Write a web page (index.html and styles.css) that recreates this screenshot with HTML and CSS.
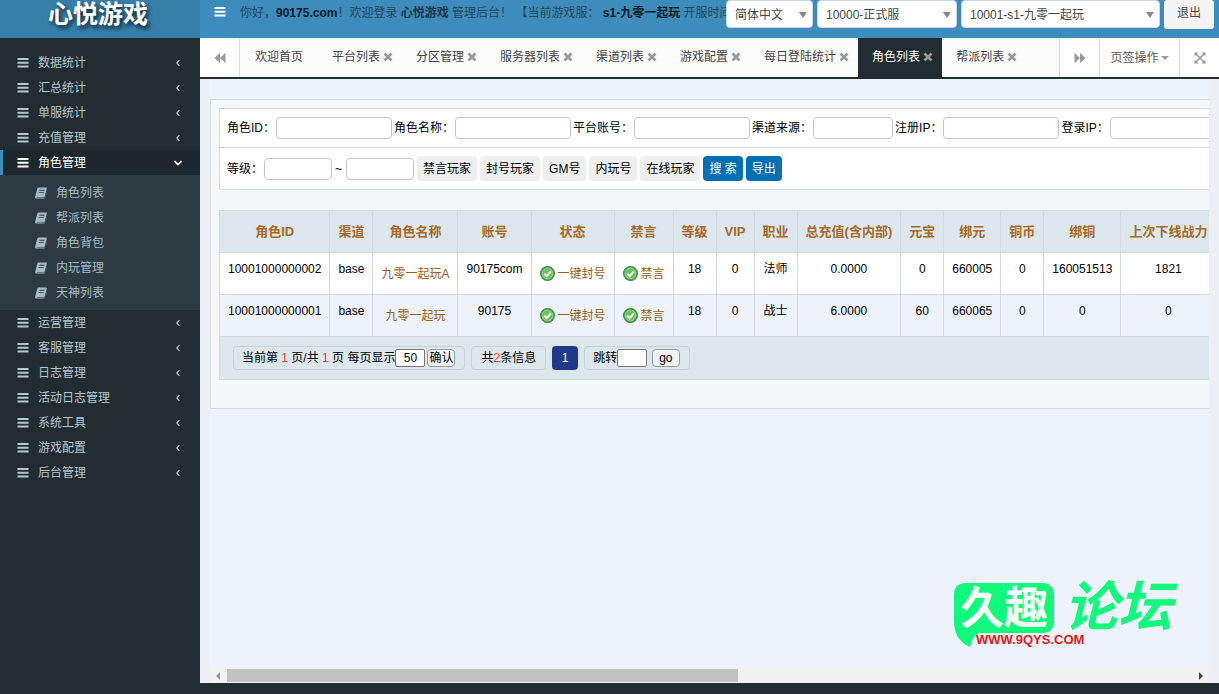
FILE: index.html
```html
<!DOCTYPE html>
<html lang="zh-CN">
<head>
<meta charset="utf-8">
<title>心悦游戏 管理后台</title>
<link rel="stylesheet" href="styles.css">
</head>
<body>
<svg class="sprite" aria-hidden="true">
  <symbol id="bars" viewBox="0 0 12 12"><path d="M.5 1h11v2H.5zM.5 4.700h11v2H.5zM.5 8.400h11v2H.5z" fill="currentColor"/></symbol>
  <symbol id="left" viewBox="0 0 6 10"><path d="M4.8 1.5 1.5 5l3.300 3.500" fill="none" stroke="currentColor" stroke-width="1.500"/></symbol>
  <symbol id="down" viewBox="0 0 10 6"><path d="M1.500 1.200 5 4.500 8.500 1.200" fill="none" stroke="currentColor" stroke-width="1.700"/></symbol>
  <symbol id="book" viewBox="0 0 12 12"><path d="M3.600.5h7.600q.8.2.6 1L9.700 9.600q-.3 1-1.300 1H2q-.6.4 0 .5h7q1 0 1.300-1L12 4v1l-1.700 5.500q-.4 1-1.500 1H1.600Q0 11.500 0 10.200L2.300 1.800Q2.700.5 3.600.5zM4.500 2.800l-.2.9h5l.2-.9zM3.900 4.900l-.2.9h5l.2-.9z" fill="currentColor" fill-rule="evenodd"/></symbol>
  <symbol id="times" viewBox="0 0 10 10"><path d="M1.500 1.500l7 7M8.500 1.500l-7 7" stroke="currentColor" stroke-width="2.700"/></symbol>
  <symbol id="back" viewBox="0 0 12 12"><path d="M6 .8v10.400L.5 6zM11.500.8v10.400L6 6z" fill="currentColor"/></symbol>
  <symbol id="forward" viewBox="0 0 12 12"><path d="M.5.8 6 6 .5 11.200zM6 .8 11.500 6 6 11.200z" fill="currentColor"/></symbol>
  <symbol id="expand" viewBox="0 0 12 12"><path d="M.5.500h4L.5 4.500zM11.500.500v4l-4-4zM.5 11.500v-4l4 4zM11.500 11.500h-4l4-4z" fill="currentColor"/><path d="M2 2l8 8M10 2l-8 8" stroke="currentColor" stroke-width="1.600"/></symbol>
  <symbol id="ok" viewBox="0 0 14 14"><circle cx="7" cy="7" r="6.500" fill="#4ba54c" stroke="#3d8a48"/><circle cx="7" cy="7" r="5" fill="#6cc25e" stroke="#b5dfae" stroke-width=".7"/><path d="M4 7.200l2.200 2.200L10.200 5" fill="none" stroke="#fff" stroke-width="1.900"/></symbol>
</svg>

<header class="top">
  <a class="logo" href="#">心悦游戏</a>
  <div class="navbar">
    <button class="toggle" aria-label="菜单"><svg class="i12"><use href="#bars"/></svg></button>
    <p class="hello">你好，<b>90175.com</b>！欢迎登录 <b class="soft">心悦游戏</b> 管理后台！ 【当前游戏服： <b>s1-九零一起玩</b> 开服时间</p>
    <div class="controls">
      <span class="pick lang"><select aria-label="语言"><option>简体中文</option></select></span>
      <span class="pick zone"><select aria-label="平台"><option>10000-正式服</option></select></span>
      <span class="pick server"><select aria-label="游戏服"><option>10001-s1-九零一起玩</option></select></span>
      <button class="exit">退出</button>
    </div>
  </div>
</header>

<div class="shell">
  <nav class="side">
    <a href="#"><svg class="i12"><use href="#bars"/></svg>数据统计<svg class="chev"><use href="#left"/></svg></a>
    <a href="#"><svg class="i12"><use href="#bars"/></svg>汇总统计<svg class="chev"><use href="#left"/></svg></a>
    <a href="#"><svg class="i12"><use href="#bars"/></svg>单服统计<svg class="chev"><use href="#left"/></svg></a>
    <a href="#"><svg class="i12"><use href="#bars"/></svg>充值管理<svg class="chev"><use href="#left"/></svg></a>
    <a href="#" class="on"><svg class="i12"><use href="#bars"/></svg>角色管理<svg class="chev"><use href="#down"/></svg></a>
    <div class="sub">
      <a href="#"><svg class="i12"><use href="#book"/></svg>角色列表</a>
      <a href="#"><svg class="i12"><use href="#book"/></svg>帮派列表</a>
      <a href="#"><svg class="i12"><use href="#book"/></svg>角色背包</a>
      <a href="#"><svg class="i12"><use href="#book"/></svg>内玩管理</a>
      <a href="#"><svg class="i12"><use href="#book"/></svg>天神列表</a>
    </div>
    <a href="#"><svg class="i12"><use href="#bars"/></svg>运营管理<svg class="chev"><use href="#left"/></svg></a>
    <a href="#"><svg class="i12"><use href="#bars"/></svg>客服管理<svg class="chev"><use href="#left"/></svg></a>
    <a href="#"><svg class="i12"><use href="#bars"/></svg>日志管理<svg class="chev"><use href="#left"/></svg></a>
    <a href="#"><svg class="i12"><use href="#bars"/></svg>活动日志管理<svg class="chev"><use href="#left"/></svg></a>
    <a href="#"><svg class="i12"><use href="#bars"/></svg>系统工具<svg class="chev"><use href="#left"/></svg></a>
    <a href="#"><svg class="i12"><use href="#bars"/></svg>游戏配置<svg class="chev"><use href="#left"/></svg></a>
    <a href="#"><svg class="i12"><use href="#bars"/></svg>后台管理<svg class="chev"><use href="#left"/></svg></a>
  </nav>

  <main class="content">
    <div class="tabs">
      <button class="roll first" aria-label="向左"><svg class="i12"><use href="#back"/></svg></button>
      <div class="tablist">
        <a href="#" class="home">欢迎首页</a>
        <a href="#">平台列表<svg class="x"><use href="#times"/></svg></a>
        <a href="#">分区管理<svg class="x"><use href="#times"/></svg></a>
        <a href="#">服务器列表<svg class="x"><use href="#times"/></svg></a>
        <a href="#">渠道列表<svg class="x"><use href="#times"/></svg></a>
        <a href="#">游戏配置<svg class="x"><use href="#times"/></svg></a>
        <a href="#">每日登陆统计<svg class="x"><use href="#times"/></svg></a>
        <a href="#" class="current">角色列表<svg class="x"><use href="#times"/></svg></a>
        <a href="#">帮派列表<svg class="x"><use href="#times"/></svg></a>
      </div>
      <button class="roll" aria-label="向右"><svg class="i12"><use href="#forward"/></svg></button>
      <button class="roll ops">页签操作<span class="caret"></span></button>
      <button class="roll" aria-label="全屏"><svg class="i12"><use href="#expand"/></svg></button>
    </div>

    <div class="frame">
      <div class="view">
        <div class="panel">
          <form class="filter">
            <div class="line">
              <label>角色ID：<input type="text"></label>
              <label>角色名称：<input type="text"></label>
              <label>平台账号：<input type="text"></label>
              <label>渠道来源：<input type="text" class="mid"></label>
              <label>注册IP：<input type="text"></label>
              <label>登录IP：<input type="text"></label>
            </div>
            <div class="line second">
              <label>等级：<input type="text" class="short"></label>
              <label class="to">~<input type="text" class="short"></label>
              <button type="button">禁言玩家</button>
              <button type="button">封号玩家</button>
              <button type="button">GM号</button>
              <button type="button">内玩号</button>
              <button type="button">在线玩家</button>
              <button type="button" class="blue">搜 索</button>
              <button type="button" class="blue">导出</button>
            </div>
          </form>

          <table class="grid">
            <thead>
              <tr><th>角色ID</th><th>渠道</th><th>角色名称</th><th>账号</th><th>状态</th><th>禁言</th><th>等级</th><th>VIP</th><th>职业</th><th>总充值(含内部)</th><th>元宝</th><th>绑元</th><th>铜币</th><th>绑铜</th><th>上次下线战力</th></tr>
            </thead>
            <tbody>
              <tr><td>10001000000002</td><td>base</td><td class="act"><a href="#">九零一起玩A</a></td><td>90175com</td><td class="act"><a href="#"><svg class="ok"><use href="#ok"/></svg>一键封号</a></td><td class="act"><a href="#"><svg class="ok"><use href="#ok"/></svg>禁言</a></td><td>18</td><td>0</td><td>法师</td><td>0.0000</td><td>0</td><td>660005</td><td>0</td><td>160051513</td><td>1821</td></tr>
              <tr><td>10001000000001</td><td>base</td><td class="act"><a href="#">九零一起玩</a></td><td>90175</td><td class="act"><a href="#"><svg class="ok"><use href="#ok"/></svg>一键封号</a></td><td class="act"><a href="#"><svg class="ok"><use href="#ok"/></svg>禁言</a></td><td>18</td><td>0</td><td>战士</td><td>6.0000</td><td>60</td><td>660065</td><td>0</td><td>0</td><td>0</td></tr>
            </tbody>
            <tfoot>
              <tr><td colspan="15">
                <div class="pager">
                  <div class="box"><label>当前第 <em>1</em> 页/共 <em>1</em> 页 每页显示<input type="text" value="50"></label><button>确认</button></div>
                  <div class="box total"><span>共<em>2</em>条信息</span></div>
                  <a class="page" href="#">1</a>
                  <div class="box jump"><label>跳转<input type="text"></label><button class="go">go</button></div>
                </div>
              </td></tr>
            </tfoot>
          </table>
        </div>
      </div>
      <div class="hbar" aria-hidden="true"><i class="arr l"></i><div class="track"><div class="thumb"></div></div><i class="arr r"></i></div>
      <div class="brand">
        <svg class="bubble" viewBox="0 0 100 64"><path d="M12 0H88Q100 0 100 12V38Q100 50 88 50H25Q18 53 16 64Q0 57 0 38V12Q0 0 12 0z" fill="#10f97c"/></svg>
        <span class="name">久趣</span>
        <span class="forum">论坛</span>
        <span class="url">WWW.9QYS.COM</span>
      </div>
    </div>
  </main>
</div>
</body>
</html>
```
FILE: styles.css
```css
* { box-sizing: border-box; }
body {
  margin: 0;
  height: 100vh;
  display: flex;
  flex-direction: column;
  overflow: hidden;
  background: #222d32;
  color: #000;
  font: 12px/16px "Liberation Sans", "Noto Sans CJK SC", sans-serif;
}
button, input, select { font: inherit; color: inherit; margin: 0; }
button { border: 0; padding: 0; background: none; white-space: nowrap; cursor: pointer; }
a { color: inherit; text-decoration: none; }
svg { flex: none; display: block; }
em { font-style: normal; color: #f33; }
.sprite { position: absolute; width: 0; height: 0; }
.i12 { width: 12px; height: 12px; }

/* header */
.top { display: flex; height: 38px; flex: none; }
.logo {
  width: 200px;
  background: #367fa9;
  color: #fff;
  font-size: 25px;
  font-weight: bold;
  line-height: 28px;
  text-align: center;
  padding-right: 4px;
  text-shadow: 2px 3px 4px #123;
}
.navbar { flex: 1; min-width: 0; display: flex; align-items: flex-start; background: #3c8dbc; padding-right: 5px; }
.toggle { color: #fff; padding: 6px 14px 0; }
.hello { flex: 1; min-width: 0; margin: 0; padding-top: 5px; overflow: hidden; white-space: nowrap; color: #27465a; }
.hello b { color: #0a1a26; }
.hello .soft { color: #1d3647; }
.controls { display: flex; gap: 4px; }
.pick { position: relative; }
.pick::after {
  content: "";
  position: absolute;
  right: 6px;
  top: 12px;
  border: 4px solid transparent;
  border-top: 6px solid #888;
  border-bottom: 0;
  pointer-events: none;
}
.pick select {
  appearance: none;
  width: 100%;
  height: 28px;
  padding: 2px 8px 0;
  border: 1px solid #d2d6de;
  border-radius: 4px;
  background: #fff;
  color: #444;
}
.lang { width: 87px; }
.zone { width: 140px; }
.server { width: 199px; }
.exit { width: 50px; height: 29px; padding-bottom: 3px; border-radius: 3px; background: #f4f4f4; color: #444; }

/* sidebar */
.shell { flex: 1; display: flex; min-height: 0; }
.side { width: 200px; flex: none; padding-top: 12px; color: #b8c7ce; }
.side a { display: flex; align-items: center; gap: 9px; height: 25px; padding: 0 17px 0 14px; border-left: 3px solid transparent; }
.side .on { color: #fff; background: #1e282c; border-color: #3c8dbc; }
.chev { width: 10px; height: 8px; margin-left: auto; }
.sub { background: #2c3b41; padding: 5px 0; color: #a6bac4; }
.sub a { padding-left: 32px; }

/* tabs */
.content { flex: 1; min-width: 0; display: flex; flex-direction: column; margin-bottom: 11px; background: #ecf0f5; }
.tabs { display: flex; height: 41px; flex: none; background: #fafafa; border-bottom: 2px solid #222d32; color: #444; }
.roll { width: 40px; display: flex; align-items: center; justify-content: center; background: #fff; border-left: 1px solid #ddd; color: #999; }
.roll.first { border-left: 0; border-right: 1px solid #ddd; }
.roll.ops { width: 80px; color: #555; gap: 2px; }
.caret { border: 4px solid transparent; border-top: 4px solid #999; border-bottom: 0; }
.tablist { flex: 1; min-width: 0; display: flex; overflow: hidden; }
.tablist a { display: flex; align-items: center; gap: 3px; padding: 0 9px 2px 14px; white-space: nowrap; }
.tablist .home { padding: 0 15px 2px; }
.tablist .current { background: #222d32; color: #fff; }
.x { width: 10px; height: 10px; color: #999; }

/* page */
.frame { position: relative; flex: 1; min-height: 0; display: flex; flex-direction: column; margin: 0 10px; background: #edf2fb; }
.view { flex: 1; min-height: 0; overflow: hidden; padding-top: 20px; }
.panel { width: max-content; min-width: 100%; padding: 8px 8px 28px; border: 1px solid #d3dbde; background: #f5f8fb; }
.filter { border: 1px solid #d3dbde; background: #fff; margin-bottom: 20px; }
.line { display: flex; align-items: center; gap: 2px; height: 38px; padding: 0 7px; white-space: nowrap; }
.line label { display: flex; align-items: center; gap: 1px; }
.line input { width: 116px; height: 22px; border: 1px solid #c4c8cc; border-radius: 4px; background: #fff; padding: 0 6px; }
.line .mid { width: 80px; }
.line .short { width: 68px; }
.line .to { gap: 4px; }
.second { gap: 3px; height: 42px; border-top: 1px solid #d3dbde; }
.line button { height: 25px; padding: 0 6px; border-radius: 4px; background: #efefef; }
.line .blue { background: #0070b5; color: #fff; }

.grid { border-collapse: collapse; text-align: center; white-space: nowrap; background: #fff; }
.grid th, .grid td { border: 1px solid #d3dbde; padding: 0 8px; height: 42px; }
.grid th { font-size: 13px; color: #a8691f; background: #dbe7ed; }
.grid td { vertical-align: top; padding-top: 8px; }
.grid tbody tr:nth-child(2) { background: #edf2fb; }
.grid .act { vertical-align: middle; padding-top: 0; }
.grid .act a { display: flex; align-items: center; justify-content: center; gap: 3px; color: #96600f; }
.ok { width: 15px; height: 15px; }
.grid tfoot td { background: #dbe7ea; height: 43px; padding: 0 13px; vertical-align: middle; }
.pager { display: flex; gap: 6px; }
.box { display: flex; align-items: center; gap: 2px; height: 24px; padding: 0 9px 0 8px; border: 1px solid #c5d2d9; border-radius: 4px; }
.box.total { padding: 0 9px; }
.box label { display: flex; align-items: center; white-space: pre; }
.box input { width: 30px; height: 18px; padding: 0; text-align: center; border: 1px solid #777; border-radius: 2px; background: #fff; }
.box button { height: 18px; padding: 0 1px; border: 1px solid #999; border-radius: 4px; background: #f0f3f6; line-height: 16px; }
.box .go { padding: 0 6px; margin-left: 3px; }
.page { width: 26px; line-height: 24px; border-radius: 4px; background: #1f3a88; color: #fff; }

/* horizontal scroll bar */
.hbar { display: flex; align-items: center; height: 15px; background: #f1f1f1; padding: 0 6px; }
.arr { border: 4px solid transparent; }
.arr.l { border-right-color: #999; border-left: 0; }
.arr.r { border-left-color: #444; border-right: 0; }
.track { flex: 1; margin: 0 7px; }
.thumb { width: 53%; height: 13px; background: #c1c1c1; }

/* forum mark floating above the page */
.brand { position: absolute; right: 29px; bottom: 36px; width: 226px; height: 64px; color: #10f97c; font-weight: bold; white-space: nowrap; }
.bubble { width: 100px; height: 64px; }
.brand span { position: absolute; }
.brand .name { left: 6px; top: 2px; font-size: 44px; line-height: 48px; color: #f3fff9; }
.brand .forum { right: 8px; top: -4px; font-size: 54px; line-height: 56px; font-style: italic; }
.brand .url { left: 22px; top: 49px; font-size: 13px; color: #e01b1b; }
```
